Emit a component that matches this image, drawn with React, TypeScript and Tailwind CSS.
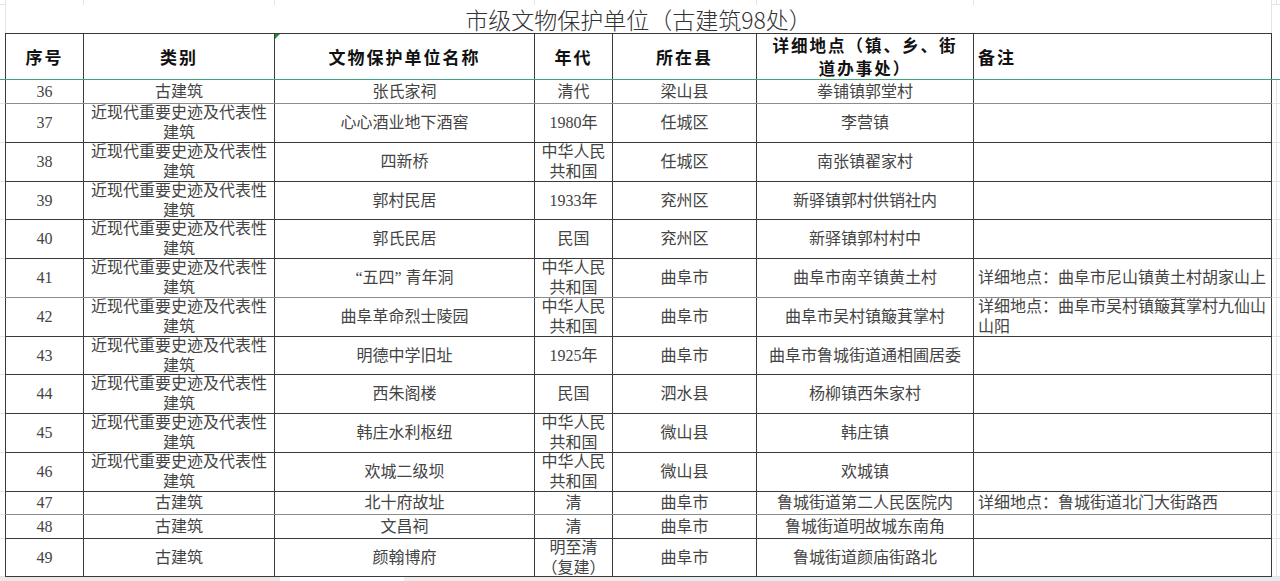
import React from "react";

type Row = {
  no: string;
  kind: string;
  name: string;
  era: string;
  county: string;
  addr: string;
  note?: string;
  h: string;
  line?: string;
};

const MODERN = "近现代重要史迹及代表性建筑";
const PRC = "中华人民共和国";

const rows: Row[] = [
  { no: "36", kind: "古建筑", name: "张氏家祠", era: "清代", county: "梁山县", addr: "拳铺镇郭堂村", h: "h-[24px]", line: "border-b-[#8c8c8c]" },
  { no: "37", kind: MODERN, name: "心心酒业地下酒窖", era: "1980年", county: "任城区", addr: "李营镇", h: "h-[39px]" },
  { no: "38", kind: MODERN, name: "四新桥", era: PRC, county: "任城区", addr: "南张镇翟家村", h: "h-[39px]" },
  { no: "39", kind: MODERN, name: "郭村民居", era: "1933年", county: "兖州区", addr: "新驿镇郭村供销社内", h: "h-[38px]" },
  { no: "40", kind: MODERN, name: "郭氏民居", era: "民国", county: "兖州区", addr: "新驿镇郭村村中", h: "h-[39px]" },
  { no: "41", kind: MODERN, name: "“五四” 青年洞", era: PRC, county: "曲阜市", addr: "曲阜市南辛镇黄土村", note: "详细地点：曲阜市尼山镇黄土村胡家山上", h: "h-[39px]", line: "border-b-[#8c8c8c]" },
  { no: "42", kind: MODERN, name: "曲阜革命烈士陵园", era: PRC, county: "曲阜市", addr: "曲阜市吴村镇簸萁掌村", note: "详细地点：曲阜市吴村镇簸萁掌村九仙山山阳", h: "h-[39px]" },
  { no: "43", kind: MODERN, name: "明德中学旧址", era: "1925年", county: "曲阜市", addr: "曲阜市鲁城街道通相圃居委", h: "h-[38px]" },
  { no: "44", kind: MODERN, name: "西朱阁楼", era: "民国", county: "泗水县", addr: "杨柳镇西朱家村", h: "h-[39px]" },
  { no: "45", kind: MODERN, name: "韩庄水利枢纽", era: PRC, county: "微山县", addr: "韩庄镇", h: "h-[39px]" },
  { no: "46", kind: MODERN, name: "欢城二级坝", era: PRC, county: "微山县", addr: "欢城镇", h: "h-[39px]" },
  { no: "47", kind: "古建筑", name: "北十府故址", era: "清", county: "曲阜市", addr: "鲁城街道第二人民医院内", note: "详细地点：鲁城街道北门大街路西", h: "h-[23px]", line: "border-b-[#8c8c8c]" },
  { no: "48", kind: "古建筑", name: "文昌祠", era: "清", county: "曲阜市", addr: "鲁城街道明故城东南角", h: "h-[24px]" },
  { no: "49", kind: "古建筑", name: "颜翰博府", era: "明至清（复建）", county: "曲阜市", addr: "鲁城街道颜庙街路北", h: "h-[38px]" },
];

const cols = "grid grid-cols-[79px_191px_260px_78px_144px_217px_298px]";

// one spreadsheet line: gutter on the left, table part, gutter on the right
function Line({ h, children, edge = "border-[#e4e4e4]" }: { h: string; children: React.ReactNode; edge?: string }) {
  return (
    <div className={`flex ${h}`}>
      <div className={`w-[5px] shrink-0 border-b ${edge}`} />
      <div className="w-[1267px] shrink-0">{children}</div>
      <div className={`w-[5px] shrink-0 border-b border-r ${edge}`} />
      <div className={`flex-1 border-b ${edge}`} />
    </div>
  );
}

function Cell({ children, left, first }: { children?: React.ReactNode; left?: boolean; first?: boolean }) {
  return (
    <div
      className={`flex items-center overflow-hidden border-r border-[#3a3a3a] leading-[20px] ${
        first ? "border-l" : ""
      } ${left ? "justify-start pl-[4px] pr-[2px] text-left" : "justify-center px-[4px] text-center"}`}
    >
      <div>{children}</div>
    </div>
  );
}

export default function App() {
  return (
    <div className="h-[581px] w-[1280px] overflow-hidden bg-white font-['Liberation_Serif','Noto_Sans_CJK_SC',serif] text-[16px] text-[#444]">
      {/* empty gridline row above the title */}
      <Line h="h-[5px]">
        <div className={`${cols} h-full`}>
          <div className="border-l border-r border-[#e4e4e4]" />
          <div className="border-r border-[#e4e4e4]" />
          <div className="border-r border-[#e4e4e4]" />
          <div />
          <div className="border-r border-[#e4e4e4]" />
          <div className="border-r border-[#e4e4e4]" />
          <div className="border-r border-[#e4e4e4]" />
        </div>
      </Line>

      {/* title */}
      <Line h="h-[28px]" edge="border-transparent">
        <div className="flex h-full items-center justify-center border-l border-r border-[#e4e4e4] font-['Noto_Sans_CJK_SC',sans-serif] text-[23px] font-light leading-none text-[#333]">
          市级文物保护单位（古建筑98处）
        </div>
      </Line>

      {/* header */}
      <div className="flex h-[46px]">
        <div className="w-[5px] shrink-0" />
        <div className={`${cols} w-[1267px] shrink-0 border-t border-[#3a3a3a] font-['Noto_Sans_CJK_SC',sans-serif] text-[17px] font-bold tracking-[2px] text-[#111]`}>
          <Cell first>序号</Cell>
          <Cell>类别</Cell>
          <div className="relative flex items-center justify-center border-r border-[#3a3a3a]">
            <span className="absolute left-0 top-0 h-0 w-0 border-l-[5px] border-t-[5px] border-l-transparent border-t-[#1f8f3a] [transform:scaleX(-1)]" />
            文物保护单位名称
          </div>
          <Cell>年代</Cell>
          <Cell>所在县</Cell>
          <div className="flex flex-col items-center justify-center overflow-hidden border-r border-[#3a3a3a] text-center text-[16.5px] leading-[23px]">
            <span>详细地点（镇、乡、街</span>
            <span>道办事处）</span>
          </div>
          <Cell left>备注</Cell>
        </div>
        <div className="flex-1" />
      </div>

      {/* frozen pane line */}
      <div className="h-px w-full bg-[#3fa37c]" />

      {rows.map((r) => (
        <Line key={r.no} h={r.h}>
          <div className={`${cols} h-full border-b border-[#3a3a3a] ${r.line ?? ""}`}>
            <Cell first>{r.no}</Cell>
            <Cell>{r.kind}</Cell>
            <Cell>{r.name}</Cell>
            <Cell>{r.era}</Cell>
            <Cell>{r.county}</Cell>
            <Cell>{r.addr}</Cell>
            <Cell left>{r.note}</Cell>
          </div>
        </Line>
      ))}

      {/* bottom bar peeking in */}
      <div className="flex h-[4px]">
        <div className="w-[280px] bg-[#efe7e6]" />
        <div className="w-[124px] bg-white" />
        <div className="w-[236px] bg-[#f1ebea]" />
        <div className="flex-1 bg-[#e5ecf0]" />
      </div>
    </div>
  );
}
